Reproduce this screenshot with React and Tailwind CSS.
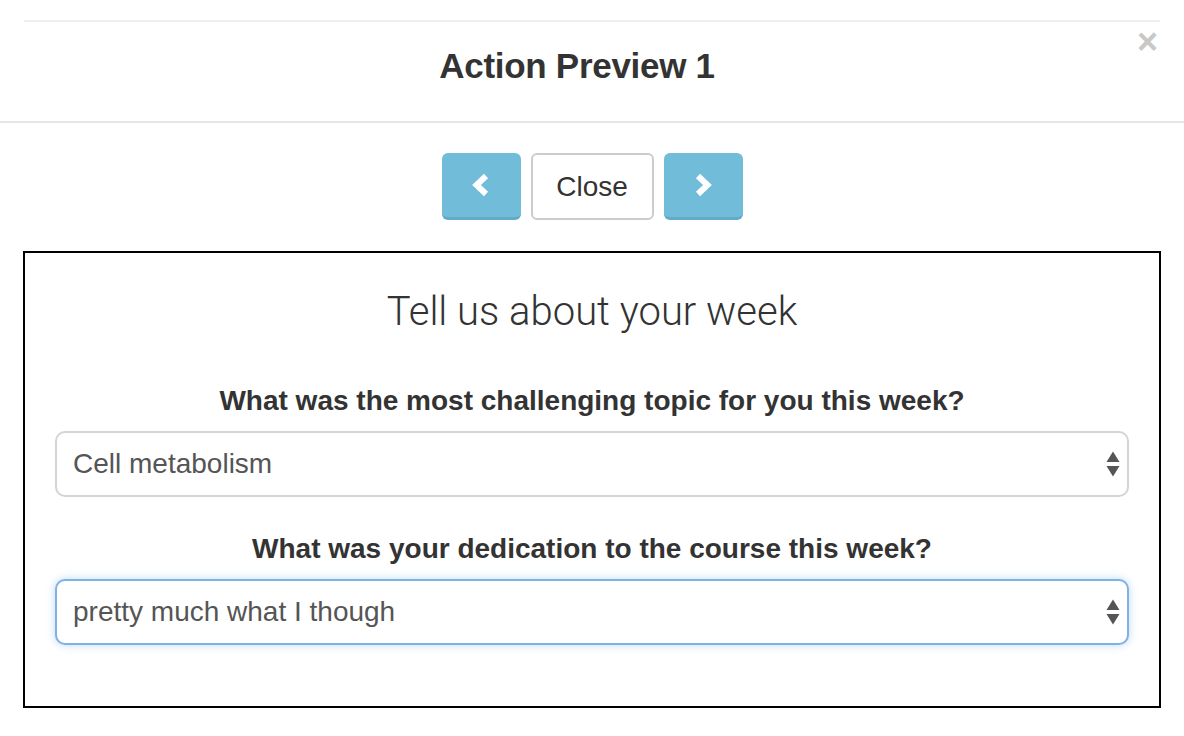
import { useState } from "react";

function Chevron({ dir }) {
  return (
    <svg width="22" height="24" viewBox="0 0 22 24" className="block">
      {dir === "left" ? (
        <path d="M16 3 L6.5 12 L16 21" fill="none" stroke="white" strokeWidth="6" strokeLinejoin="miter" />
      ) : (
        <path d="M6 3 L15.5 12 L6 21" fill="none" stroke="white" strokeWidth="6" strokeLinejoin="miter" />
      )}
    </svg>
  );
}

function Arrows() {
  return (
    <svg width="14" height="26" viewBox="0 0 14 26" className="block">
      <path d="M7 0.5 L13.5 11 L0.5 11 Z" fill="#555" />
      <path d="M0.5 15 L13.5 15 L7 25.5 Z" fill="#555" />
    </svg>
  );
}

function Select({ value, focused }) {
  return (
    <div
      className={`flex items-center justify-between h-[66px] pl-[16px] pr-[7px] rounded-[10px] bg-white border-2 ${
        focused ? "border-[#7fb2e2] shadow-[0_0_8px_rgba(102,175,233,0.45)]" : "border-[#d4d4d4]"
      }`}
    >
      <span className="text-[28px] text-[#555]">{value}</span>
      <Arrows />
    </div>
  );
}

export default function App() {
  const [page] = useState(1);

  return (
    <div className="w-[1184px] h-[736px] bg-white text-[#333] font-['Liberation_Sans',Arial,sans-serif]">
      <div className="pt-[20px] px-[24px]">
        <div className="h-[2px] bg-[#eeeeee]"></div>
      </div>
      <div className="relative h-[99px] flex items-center justify-center pr-[30px]">
        <h1 className="text-[35px] font-bold tracking-[-0.3px] pb-[10px]">Action Preview {page}</h1>
        <span className="absolute right-[26px] top-[2px] text-[36px] font-bold text-[#c8c8c8] leading-none">×</span>
      </div>
      <div className="h-[2px] bg-[#e5e5e5]"></div>

      <div className="flex justify-center gap-[10px] pt-[30px]">
        <button className="w-[79px] h-[67px] rounded-[6px] bg-[#70bcd9] border-b-[3px] border-[#5fabc8] flex items-center justify-center">
          <Chevron dir="left" />
        </button>
        <button className="w-[123px] h-[67px] rounded-[6px] bg-white border-2 border-[#cccccc] text-[28px] text-[#333]">
          Close
        </button>
        <button className="w-[79px] h-[67px] rounded-[6px] bg-[#70bcd9] border-b-[3px] border-[#5fabc8] flex items-center justify-center">
          <Chevron dir="right" />
        </button>
      </div>

      <div className="mx-[23px] mt-[31px] h-[457px] border-2 border-black px-[30px]">
        <h2 className="text-center text-[40px] font-light font-['Roboto',sans-serif] text-[#333] pt-[35px] leading-[48px]">
          Tell us about your week
        </h2>
        <p className="text-center text-[28px] font-bold mt-[47px] leading-[36px]">
          What was the most challenging topic for you this week?
        </p>
        <div className="mt-[12px]">
          <Select value="Cell metabolism" />
        </div>
        <p className="text-center text-[28px] font-bold mt-[34px] leading-[36px]">
          What was your dedication to the course this week?
        </p>
        <div className="mt-[12px]">
          <Select value="pretty much what I though" focused />
        </div>
      </div>
    </div>
  );
}
